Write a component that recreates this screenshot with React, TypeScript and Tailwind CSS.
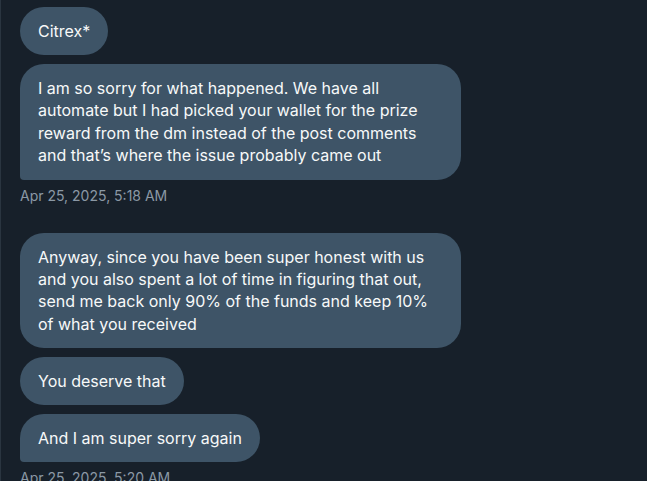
import React from "react";

type Msg = { text: string; last?: boolean };

const groups: { msgs: Msg[]; time: string }[] = [
  {
    msgs: [
      { text: "Citrex*" },
      {
        text: "I am so sorry for what happened. We have all automate but I had picked your wallet for the prize reward from the dm instead of the post comments and that’s where the issue probably came out",
        last: true,
      },
    ],
    time: "Apr 25, 2025, 5:18 AM",
  },
  {
    msgs: [
      {
        text: "Anyway, since you have been super honest with us and you also spent a lot of time in figuring that out, send me back only 90% of the funds and keep 10% of what you received",
      },
      { text: "You deserve that" },
      { text: "And I am super sorry again", last: true },
    ],
    time: "Apr 25, 2025, 5:20 AM",
  },
];

function Bubble({ msg }: { msg: Msg }) {
  return (
    <div
      className={`max-w-[441px] w-fit bg-[#3e5467] text-[#f7f9f9] text-[16px] leading-[22.4px] pl-[18px] pr-[18px] py-[13px] rounded-[24px] ${
        msg.last ? "rounded-bl-[4px]" : ""
      }`}
    >
      {msg.text}
    </div>
  );
}

export default function App() {
  return (
    <div
      className="w-[647px] h-[481px] overflow-hidden bg-[#17202a] border-l border-[#2a3540]"
      style={{ fontFamily: "Inter, 'Liberation Sans', sans-serif" }}
    >
      <div className="pl-[19px] pt-[7px] flex flex-col">
        {groups.map((g, i) => (
          <div key={i} className={`flex flex-col ${i > 0 ? "mt-[27px]" : ""}`}>
            <div className="flex flex-col gap-[8.5px]">
              {g.msgs.map((m, j) => (
                <Bubble key={j} msg={m} />
              ))}
            </div>
            <div className="mt-[6px] text-[14px] leading-[20px] text-[#8b98a5]">{g.time}</div>
          </div>
        ))}
      </div>
    </div>
  );
}
